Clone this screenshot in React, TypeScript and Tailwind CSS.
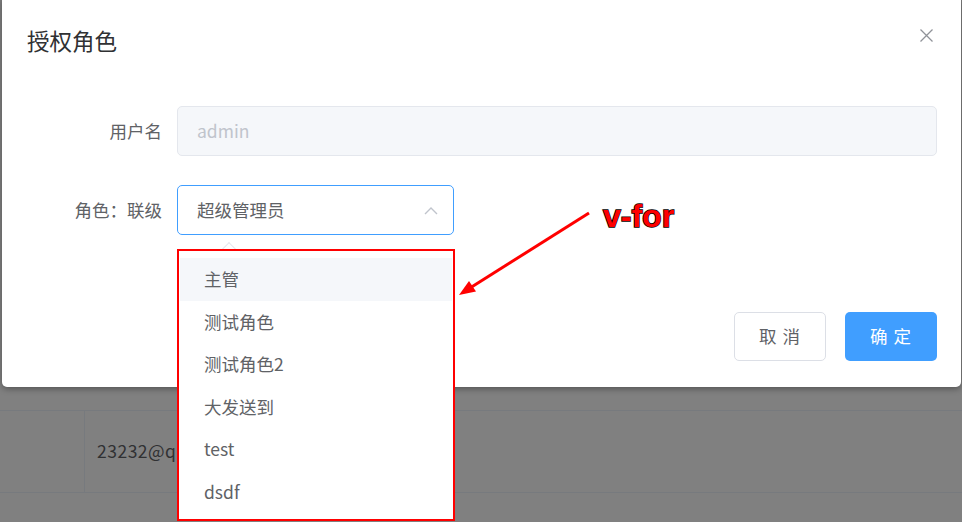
import React from "react";

const items = ["主管", "测试角色", "测试角色2", "大发送到", "test", "dsdf"];

export default function App() {
  return (
    <div
      className="relative w-[962px] h-[522px] overflow-hidden bg-[#808080]"
      style={{ fontFamily: '"Noto Sans CJK SC", "Noto Sans", sans-serif' }}
    >
      {/* background table (under the overlay) */}
      <div className="flex flex-col">
        <div className="h-[411px] border-b border-[#777a7e]" />
        <div className="flex h-[82px] border-b border-[#777a7e]">
          <div className="w-[85px] border-r border-[#777a7e]" />
          <div className="w-[92px] overflow-hidden whitespace-nowrap flex items-center pl-[12px] text-[17.5px] tracking-[0.5px] text-[#303133]">
            23232@qq.com
          </div>
        </div>
      </div>

      {/* dialog */}
      <div className="absolute left-[2px] top-[-4px] w-[959px] h-[391px] bg-white rounded-[5px] shadow-[0_2px_6px_rgba(0,0,0,0.35)] flex flex-col">
        <div className="relative pt-[29px] pl-[25px] pb-[12px]">
          <div className="text-[22.5px] leading-[30px] text-[#303133]">授权角色</div>
          <svg className="absolute right-[28px] top-[33px]" width="13" height="13" viewBox="0 0 13 13">
            <path d="M0.5 0.5 L12.5 12.5 M12.5 0.5 L0.5 12.5" stroke="#909399" strokeWidth="1.3" />
          </svg>
        </div>
        <div className="pt-[39px] pl-[37px] pr-[24px] flex flex-col gap-[29px]">
          <div className="flex items-center">
            <div className="w-[138px] pr-[15px] text-right text-[17.5px] text-[#606266]">用户名</div>
            <div className="flex-1 h-[50px] rounded-[5px] border border-[#e4e7ed] bg-[#f5f7fa] flex items-center pl-[19px] text-[17.5px] text-[#c0c4cc]">
              admin
            </div>
          </div>
          <div className="flex items-center">
            <div className="w-[138px] pr-[15px] text-right text-[17.5px] text-[#606266]">角色：联级</div>
            <div className="w-[277px] h-[50px] rounded-[5px] border border-[#409eff] bg-white flex items-center justify-between pl-[19px] pr-[15px] text-[17.5px] text-[#606266]">
              <span>超级管理员</span>
              <svg width="14" height="9" viewBox="0 0 14 9">
                <path d="M1 8 L7 2 L13 8" fill="none" stroke="#c0c4cc" strokeWidth="1.4" />
              </svg>
            </div>
          </div>
        </div>
        <div className="flex-1" />
        <div className="flex justify-end gap-[19px] pr-[24px] pb-[26px]">
          <button className="w-[92px] h-[49px] rounded-[5px] border border-[#dcdfe6] bg-white text-[17.5px] text-[#606266] tracking-[1px]">
            取 消
          </button>
          <button className="w-[92px] h-[49px] rounded-[5px] bg-[#409eff] text-[17.5px] text-white tracking-[1px]">
            确 定
          </button>
        </div>
      </div>

      {/* popper arrow */}
      <div className="absolute left-[224px] top-[244px] w-[10px] h-[10px] rotate-45 bg-white border-l border-t border-[#e4e7ed]" />

      {/* dropdown */}
      <div className="absolute left-[177px] top-[249px] w-[278px] h-[272px] bg-white border-[2px] border-[#ff0000] pt-[7px] pr-[1px] pl-[1px]">
        {items.map((t, i) => (
          <div
            key={t}
            className={`h-[42.5px] flex items-center pl-[24px] text-[17.5px] text-[#606266] ${i === 0 ? "bg-[#f5f7fa]" : ""}`}
          >
            {t}
          </div>
        ))}
      </div>

      {/* annotation arrow */}
      <svg className="absolute left-0 top-0" width="962" height="522" viewBox="0 0 962 522">
        <line x1="589" y1="213" x2="470" y2="288" stroke="#ff0000" strokeWidth="3" />
        <polygon points="459,295 476,291.6 469,281" fill="#ff0000" />
      </svg>

      {/* annotation text */}
      <div
        className="absolute left-[603px] top-[196px] text-[32px] font-bold leading-[40px] text-[#ff0000] [-webkit-text-stroke:1.5px_#000] [paint-order:stroke_fill]"
        style={{ fontFamily: '"Liberation Sans", Arial, sans-serif' }}
      >
        v-for
      </div>
    </div>
  );
}
